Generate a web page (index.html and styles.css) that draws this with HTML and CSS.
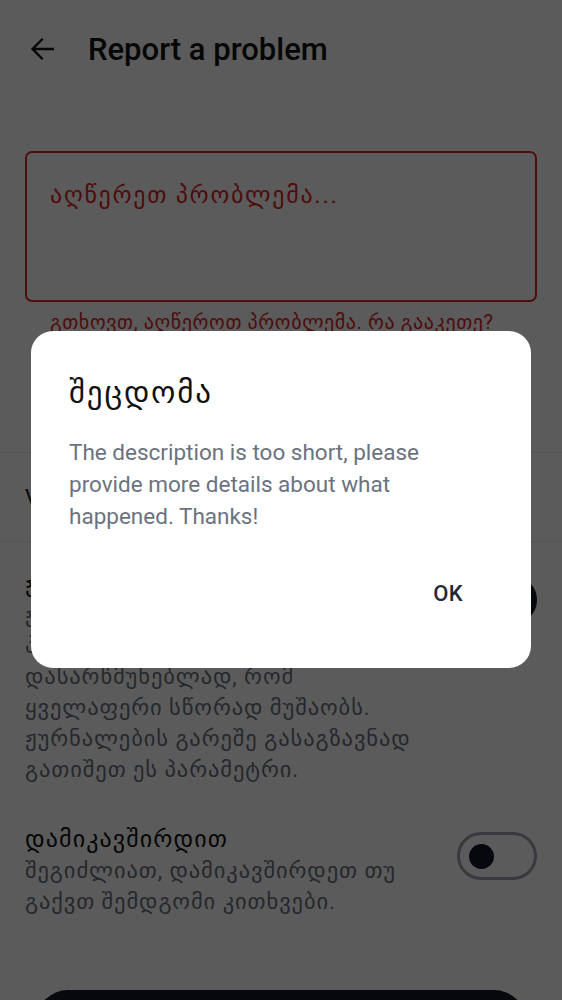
FILE: index.html
```html
<!DOCTYPE html>
<html lang="ka">
<head>
<meta charset="utf-8">
<title>Report a problem</title>
<link rel="stylesheet" href="styles.css">
</head>
<body>
<div class="screen">
  <header class="topbar">
    <svg class="back" viewBox="0 0 24 24" width="36" height="36" aria-hidden="true">
      <path d="M20 11.1H7.6l5.4-5.4-1.1-1.1L4.6 12l7.3 7.4 1.1-1.1-5.4-5.4H20z" fill="currentColor"/>
    </svg>
    <h1 class="title">Report a problem</h1>
  </header>

  <section class="field">
    <div class="textarea">აღწერეთ პრობლემა...</div>
    <p class="error">გთხოვთ, აღწეროთ პრობლემა. რა გააკეთე?</p>
  </section>

  <div class="divider"></div>
  <div class="row">Version 3.8.2</div>
  <div class="divider"></div>

  <section class="setting">
    <div class="setting-text">
      <h2 class="setting-title">ჟურნალების გაგზავნა</h2>
      <p class="setting-desc">ჟურნალები გვეხმარება<br>პრობლემის მოგვარებაში და<br>დასარწმუნებლად, რომ<br>ყველაფერი სწორად მუშაობს.<br>ჟურნალების გარეშე გასაგზავნად<br>გათიშეთ ეს პარამეტრი.</p>
    </div>
    <div class="switch on"><span class="thumb"></span></div>
  </section>

  <section class="setting">
    <div class="setting-text">
      <h2 class="setting-title">დამიკავშირდით</h2>
      <p class="setting-desc">შეგიძლიათ, დამიკავშირდეთ თუ<br>გაქვთ შემდგომი კითხვები.</p>
    </div>
    <div class="switch"><span class="thumb"></span></div>
  </section>

  <button class="submit">გაგზავნა</button>
</div>

<div class="scrim"></div>
<div class="dialog" role="dialog">
  <h2 class="dialog-title">შეცდომა</h2>
  <p class="dialog-body">The description is too short, please provide more details about what happened. Thanks!</p>
  <div class="dialog-actions"><button class="dialog-ok">OK</button></div>
</div>
</body>
</html>
```
FILE: styles.css
```css
html, body {
  margin: 0;
  padding: 0;
  background: #ffffff;
  height: 1000px;
  overflow: hidden;
}
body {
  font-family: Roboto, "DejaVu Sans", sans-serif;
  color: #111827;
}
.screen {
  display: flex;
  flex-direction: column;
}
.topbar {
  height: 98px;
  display: flex;
  align-items: center;
  padding-left: 24px;
  gap: 28px;
}
.back {
  color: #111;
  display: block;
}
.title {
  margin: 0;
  font-size: 31px;
  font-weight: 500;
  color: #111;
}
.field {
  padding: 53px 25px 0;
}
.textarea {
  border: 2px solid #dc2626;
  border-radius: 7px;
  padding: 27px 23px 0;
  box-sizing: border-box;
  height: 151px;
  font-size: 24px;
  line-height: 30px;
  letter-spacing: 1.7px;
  color: #dc2626;
}
.error {
  margin: 8px 0 0;
  padding-left: 25px;
  font-size: 20px;
  line-height: 24px;
  letter-spacing: 0.6px;
  color: #dc2626;
  white-space: nowrap;
}
.divider {
  height: 1px;
  background: #e5e7eb;
}
.field + .divider {
  margin-top: 118px;
}
.row {
  height: 88px;
  display: flex;
  align-items: center;
  padding: 0 25px;
  font-size: 22px;
  color: #111;
}
.setting {
  display: flex;
  justify-content: space-between;
  align-items: flex-start;
  padding: 25px 25px 11px;
}
.setting + .setting {
  padding-top: 27px;
}
.setting-title {
  margin: 0;
  font-size: 24px;
  line-height: 32px;
  font-weight: 400;
  letter-spacing: 1.1px;
  color: #111;
}
.setting-desc {
  margin: 0;
  font-size: 22.5px;
  line-height: 31px;
  letter-spacing: 0.9px;
  color: #6b7280;
  white-space: nowrap;
}
.switch {
  flex: none;
  width: 80px;
  height: 48px;
  box-sizing: border-box;
  border: 3px solid #9ca3af;
  border-radius: 24px;
  margin-top: 9px;
  display: flex;
  align-items: center;
  padding-left: 9px;
}
.thumb {
  width: 25px;
  height: 25px;
  border-radius: 50%;
  background: #111827;
}
.switch.on {
  background: #111827;
  border-color: #111827;
  justify-content: flex-end;
  padding-right: 3px;
}
.switch.on .thumb {
  width: 36px;
  height: 36px;
  background: #ffffff;
}
.submit {
  margin: 62px 36px 0;
  height: 64px;
  border: none;
  border-radius: 32px;
  background: #111827;
  color: #fff;
  font: inherit;
  font-size: 20px;
}
.scrim {
  position: fixed;
  inset: 0;
  background: rgba(0, 0, 0, 0.643);
}
.dialog {
  position: fixed;
  left: 31px;
  top: 331px;
  width: 500px;
  height: 337px;
  box-sizing: border-box;
  background: #fff;
  border-radius: 22px;
  padding: 42px 38px 0;
  display: flex;
  flex-direction: column;
}
.dialog-title {
  margin: 0;
  font-size: 31px;
  line-height: 40px;
  font-weight: 400;
  letter-spacing: 1.8px;
  color: #111;
}
.dialog-body {
  margin: 23px 0 0;
  font-size: 22.5px;
  line-height: 32px;
  color: #6b7280;
}
.dialog-actions {
  display: flex;
  justify-content: flex-end;
  margin-top: 37px;
}
.dialog-ok {
  border: none;
  background: none;
  font-family: inherit;
  font-size: 22px;
  font-weight: 500;
  color: #1f2937;
  padding: 12px 30px;
  margin-right: 0;
  letter-spacing: 0.3px;
}
```
